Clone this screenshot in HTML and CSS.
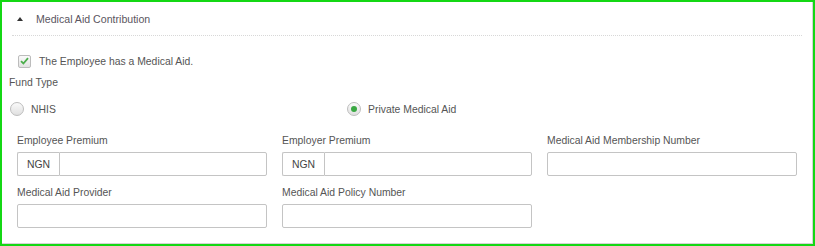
FILE: index.html
```html
<!DOCTYPE html>
<html lang="en">
<head>
    <meta charset="UTF-8">
    <title>Medical Aid Contribution</title>
    <link rel="stylesheet" href="styles.css">
</head>
<body>
    <div class="frame">
        <div class="panel">
            <div class="panel-head">
                <span class="caret"></span>
                <span class="panel-title">Medical Aid Contribution</span>
            </div>

            <label class="check-row">
                <span class="check-box">
                    <svg width="9" height="8" viewBox="0 0 9 8"><path d="M1 4.2 L3.4 6.5 L8 1.2" fill="none" stroke="#4cae4c" stroke-width="1.8"/></svg>
                </span>
                The Employee has a Medical Aid.
            </label>

            <div class="fund-label">Fund Type</div>
            <div class="radio-row">
                <label class="radio radio-nhis"><span class="radio-dot"></span>NHIS</label>
                <label class="radio"><span class="radio-dot checked"></span>Private Medical Aid</label>
            </div>

            <div class="fields">
                <div class="field">
                    <label>Employee Premium</label>
                    <div class="input-group">
                        <span class="addon">NGN</span>
                        <input type="text">
                    </div>
                </div>
                <div class="field">
                    <label>Employer Premium</label>
                    <div class="input-group">
                        <span class="addon">NGN</span>
                        <input type="text">
                    </div>
                </div>
                <div class="field">
                    <label>Medical Aid Membership Number</label>
                    <input type="text">
                </div>
                <div class="field">
                    <label>Medical Aid Provider</label>
                    <input type="text">
                </div>
                <div class="field">
                    <label>Medical Aid Policy Number</label>
                    <input type="text">
                </div>
            </div>
        </div>
    </div>
</body>
</html>
```

FILE: styles.css
```css
body {
    margin: 0;
    font-family: 'Liberation Sans', Arial, sans-serif;
    font-size: 10.4px;
    color: #555;
    background-color: #fff;
}

.frame {
    width: 815px;
    height: 246px;
    box-sizing: border-box;
    border: 2px solid #14d814;
}

.panel {
    height: 100%;
    box-sizing: border-box;
    border-right: 1px solid #d4d4d4;
    border-bottom: 1px solid #d4d4d4;
}

.panel-head {
    display: flex;
    align-items: center;
    height: 33px;
    margin: 0 10px;
    padding-left: 5px;
    border-bottom: 1px dotted #d8d8d8;
}

.caret {
    width: 0;
    height: 0;
    border-left: 3px solid transparent;
    border-right: 3px solid transparent;
    border-bottom: 4px solid #333;
    margin-right: 13px;
    margin-top: 1px;
}

.panel-title {
    color: #5a5560;
    font-size: 10.6px;
}

.check-row {
    display: flex;
    align-items: center;
    height: 14px;
    margin: 18px 0 0 16px;
}

.check-box {
    display: flex;
    align-items: center;
    justify-content: center;
    width: 11px;
    height: 11px;
    margin-right: 8px;
    border: 1px solid #bcbcbc;
    border-radius: 2px;
    background: linear-gradient(#fafafa, #e2e2e2);
}

.fund-label {
    height: 14px;
    line-height: 14px;
    margin: 8px 0 0 7px;
}

.radio-row {
    display: flex;
    height: 14px;
    margin-top: 12px;
    margin-left: 8px;
}

.radio {
    display: flex;
    align-items: center;
}

.radio-nhis {
    width: 337px;
}

.radio-dot {
    display: flex;
    align-items: center;
    justify-content: center;
    width: 12px;
    height: 12px;
    margin-right: 7px;
    border: 1px solid #bdbdbd;
    border-radius: 50%;
    background: linear-gradient(#fafafa, #e0e0e0);
}

.radio-dot.checked::after {
    content: "";
    width: 6px;
    height: 6px;
    border-radius: 50%;
    background-color: #3aa843;
}

.fields {
    display: grid;
    grid-template-columns: repeat(3, 250px);
    column-gap: 15px;
    row-gap: 10px;
    margin: 18px 0 0 15px;
}

.field label {
    display: block;
    height: 14px;
    line-height: 14px;
    margin-bottom: 4px;
}

.field input {
    display: block;
    width: 100%;
    height: 24px;
    box-sizing: border-box;
    border: 1px solid #c4c4c4;
    border-radius: 2px;
    font-family: inherit;
    font-size: inherit;
    padding: 0 6px;
}

.input-group {
    display: flex;
}

.addon {
    display: flex;
    flex-shrink: 0;
    align-items: center;
    justify-content: center;
    width: 42px;
    height: 24px;
    box-sizing: border-box;
    border: 1px solid #c4c4c4;
    border-right: none;
    border-radius: 2px 0 0 2px;
    background-color: #fff;
    color: #444;
}

.input-group input {
    flex: 1;
    min-width: 0;
    border-radius: 0 2px 2px 0;
}
```
